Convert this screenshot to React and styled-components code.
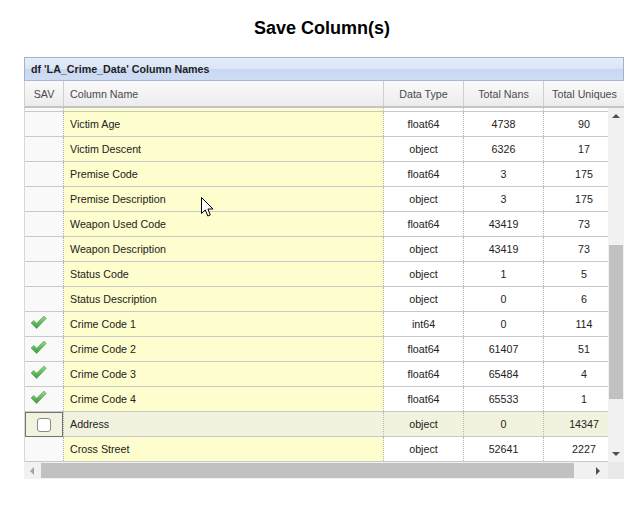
import { useLayoutEffect, useRef } from 'react';
import styled, { createGlobalStyle } from 'styled-components';

const GlobalStyle = createGlobalStyle`
  body {
    margin: 0;
    background: #ffffff;
    font-family: "Liberation Sans", Arial, sans-serif;
  }
`;

// first row sits above the viewport (scrolled past), only its bottom edge shows
const rows = [
  { name: '', type: '', nans: '', uniques: '' },
  { name: 'Victim Age', type: 'float64', nans: 4738, uniques: 90 },
  { name: 'Victim Descent', type: 'object', nans: 6326, uniques: 17 },
  { name: 'Premise Code', type: 'float64', nans: 3, uniques: 175 },
  { name: 'Premise Description', type: 'object', nans: 3, uniques: 175 },
  { name: 'Weapon Used Code', type: 'float64', nans: 43419, uniques: 73 },
  { name: 'Weapon Description', type: 'object', nans: 43419, uniques: 73 },
  { name: 'Status Code', type: 'object', nans: 1, uniques: 5 },
  { name: 'Status Description', type: 'object', nans: 0, uniques: 6 },
  { name: 'Crime Code 1', type: 'int64', nans: 0, uniques: 114, saved: true },
  { name: 'Crime Code 2', type: 'float64', nans: 61407, uniques: 51, saved: true },
  { name: 'Crime Code 3', type: 'float64', nans: 65484, uniques: 4, saved: true },
  { name: 'Crime Code 4', type: 'float64', nans: 65533, uniques: 1, saved: true },
  { name: 'Address', type: 'object', nans: 0, uniques: 14347, selected: true },
  { name: 'Cross Street', type: 'object', nans: 52641, uniques: 2227 },
];

const COLS = '39px 320px 80px 80px 81px';

const CheckIcon = () => (
  <Tick width="17" height="15" viewBox="0 0 17 15">
    <defs>
      <linearGradient id="tick" x1="0" y1="0" x2="0" y2="1">
        <stop offset="0" stopColor="#94dc8e" />
        <stop offset="1" stopColor="#3d983b" />
      </linearGradient>
    </defs>
    <path d="M1 8 L3.8 5.4 L6.6 8.2 L14 1 L16.2 3.4 L6.6 13.6 Z" fill="url(#tick)" stroke="#4f9d4b" strokeWidth="0.6" strokeLinejoin="round" />
  </Tick>
);

const Cursor = () => (
  <CursorWrap>
    <svg width="13" height="21" viewBox="0 0 13 21">
      <path d="M0.5 0.5 L0.5 16.5 L4.3 12.9 L6.8 19 L9.3 18 L6.9 12 L12 12 Z" fill="#ffffff" stroke="#000000" strokeWidth="1" strokeLinejoin="miter" />
    </svg>
  </CursorWrap>
);

const App = () => {
  const bodyRef = useRef(null);

  useLayoutEffect(() => {
    if (bodyRef.current) bodyRef.current.scrollTop = 21;
  }, []);

  return (
    <Page>
      <GlobalStyle />
      <Title>Save Column(s)</Title>
      <Grid>
        <Caption>df 'LA_Crime_Data' Column Names</Caption>
        <HeaderRow>
          <HeaderCell $center>SAV</HeaderCell>
          <HeaderCell>Column Name</HeaderCell>
          <HeaderCell $center>Data Type</HeaderCell>
          <HeaderCell $center>Total Nans</HeaderCell>
          <HeaderCell $center $last>Total Uniques</HeaderCell>
        </HeaderRow>
        <BodyWrap>
          <Viewport ref={bodyRef}>
            {rows.map((r, i) => (
              <Row key={i} $selected={r.selected}>
                <SavCell $selected={r.selected}>
                  {r.saved && <CheckIcon />}
                  {r.selected && <Checkbox />}
                </SavCell>
                <NameCell $selected={r.selected}>{r.name}</NameCell>
                <DataCell>{r.type}</DataCell>
                <DataCell>{r.nans}</DataCell>
                <DataCell>{r.uniques}</DataCell>
              </Row>
            ))}
          </Viewport>
          <VScroll>
            <ArrowBox><Arrow $dir="up" /></ArrowBox>
            <VTrack>
              <VThumb style={{ marginTop: 121, height: 154 }} />
            </VTrack>
            <ArrowBox><Arrow $dir="down" /></ArrowBox>
          </VScroll>
        </BodyWrap>
        <HScroll>
          <ArrowBox><Arrow $dir="left" $disabled /></ArrowBox>
          <HTrack>
            <HThumb style={{ width: 533 }} />
          </HTrack>
          <ArrowBox><Arrow $dir="right" /></ArrowBox>
          <Corner />
        </HScroll>
      </Grid>
      <Cursor />
    </Page>
  );
};

export default App;

const Page = styled.div`
  position: relative;
  width: 644px;
  height: 514px;
  padding-top: 18px;
  box-sizing: border-box;
`;

const Title = styled.h2`
  margin: 0 0 18px;
  text-align: center;
  font-size: 18px;
  line-height: 21px;
  font-weight: 700;
  color: #000;
`;

const Grid = styled.div`
  width: 600px;
  margin-left: 24px;
  font-size: 10.7px;
  color: #222;
`;

const Caption = styled.div`
  height: 22px;
  line-height: 22px;
  padding-left: 6px;
  border: 1px solid #a3b1d3;
  border-bottom-color: #aab6d6;
  background: linear-gradient(#e5ecf9 0%, #dbe5f7 50%, #c9d8f2 52%, #cedcf3 100%);
  font-weight: 700;
  color: #1e1e1e;
`;

const HeaderRow = styled.div`
  display: grid;
  grid-template-columns: ${COLS};
  height: 27px;
  box-sizing: border-box;
  border-left: 1px solid #d2d2d2;
  border-bottom: 2px solid #c4c4c4;
  background: linear-gradient(#fafafa, #ececec);
`;

const HeaderCell = styled.div`
  display: flex;
  align-items: center;
  justify-content: ${(p) => (p.$center ? 'center' : 'flex-start')};
  padding-left: ${(p) => (p.$center ? '0' : '6px')};
  border-right: ${(p) => (p.$last ? 'none' : '1px solid #d0d0d0')};
  color: #4a4a4a;
`;

const BodyWrap = styled.div`
  display: flex;
  height: 354px;
  border-left: 1px solid #d8d8d8;
`;

const Viewport = styled.div`
  width: 583px;
  overflow: hidden;
`;

const Row = styled.div`
  display: grid;
  grid-template-columns: ${COLS};
  width: 600px;
  height: 25px;
  box-sizing: border-box;
  border-bottom: 1px solid #c9c9c9;
  background: ${(p) => (p.$selected ? '#f2f3de' : '#ffffff')};
`;

const SavCell = styled.div`
  display: flex;
  align-items: center;
  justify-content: center;
  border-right: 1px dotted #b0b0b0;
  background: ${(p) => (p.$selected ? '#f2f3de' : '#f9f9f9')};
  box-shadow: ${(p) => (p.$selected ? 'inset 0 0 0 1px #727272' : 'none')};
  margin-bottom: ${(p) => (p.$selected ? '-1px' : '0')};
`;

const Tick = styled.svg`
  margin-right: 12px;
  margin-top: -3px;
`;

const Checkbox = styled.span`
  width: 12px;
  height: 12px;
  border: 1px solid #8a8a8a;
  border-radius: 3px;
  background: #ffffff;
`;

const NameCell = styled.div`
  display: flex;
  align-items: center;
  padding-left: 6px;
  border-right: 1px dotted #b8b8b8;
  background: ${(p) => (p.$selected ? '#f2f3de' : '#fdfdcd')};
`;

const DataCell = styled.div`
  display: flex;
  align-items: center;
  justify-content: center;
  border-right: 1px dotted #b8b8b8;
`;

const VScroll = styled.div`
  display: flex;
  flex-direction: column;
  width: 16px;
  background: #f1f1f1;
`;

const VTrack = styled.div`
  flex: 1;
  display: flex;
  flex-direction: column;
  align-items: center;
`;

const VThumb = styled.div`
  width: 14px;
  background: #c1c1c1;
`;

const ArrowBox = styled.div`
  width: 16px;
  height: 16px;
  flex: none;
  display: flex;
  align-items: center;
  justify-content: center;
`;

const Arrow = styled.span`
  width: 0;
  height: 0;
  border-style: solid;
  border-color: transparent;
  ${(p) => {
    const c = p.$disabled ? '#a3a3a3' : '#505050';
    if (p.$dir === 'up') return `border-width: 0 4px 4px; border-bottom-color: ${c};`;
    if (p.$dir === 'down') return `border-width: 4px 4px 0; border-top-color: ${c};`;
    if (p.$dir === 'left') return `border-width: 4px 4px 4px 0; border-right-color: ${c};`;
    return `border-width: 4px 0 4px 4px; border-left-color: ${c};`;
  }}
`;

const HScroll = styled.div`
  display: flex;
  height: 17px;
  background: #f1f1f1;
  align-items: center;
`;

const HTrack = styled.div`
  flex: 1;
  height: 100%;
  display: flex;
  align-items: center;
  padding-left: 1px;
`;

const HThumb = styled.div`
  height: 15px;
  background: #c1c1c1;
`;

const Corner = styled.div`
  width: 16px;
  height: 100%;
  background: #e9e9e9;
  margin-left: 2px;
`;

const CursorWrap = styled.div`
  position: absolute;
  left: 201px;
  top: 197px;
  pointer-events: none;
  line-height: 0;
`;
